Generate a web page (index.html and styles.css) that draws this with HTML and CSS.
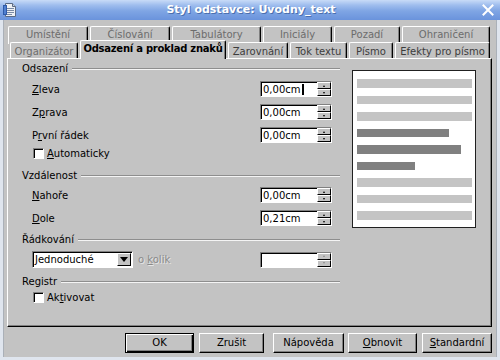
FILE: index.html
```html
<!DOCTYPE html>
<html lang="cs">
<head>
<meta charset="utf-8">
<title>Styl odstavce</title>
<link rel="stylesheet" href="styles.css">
</head>
<body>
<div class="window">
  <div class="titlebar">
    <svg class="app-icon" width="15" height="16" viewBox="0 0 15 16">
      <path d="M2.5 1.5h7l3 3v10h-10z" fill="#eef0f4" stroke="#5a6a84"/>
      <path d="M9.5 1.5v3h3" fill="#c8d0dc" stroke="#5a6a84"/>
      <rect x="4" y="6" width="7" height="1" fill="#7a8aa4"/>
      <rect x="4" y="8" width="7" height="1" fill="#7a8aa4"/>
      <rect x="4" y="10" width="7" height="1" fill="#7a8aa4"/>
      <rect x="4" y="12" width="5" height="1" fill="#7a8aa4"/>
      <rect x="0.5" y="3.5" width="3" height="9" fill="#4f7fd0" stroke="#2f5aa8"/>
    </svg>
    <div class="title">Styl odstavce: Uvodny_text</div>
    <svg class="close" width="12" height="12" viewBox="0 0 12 12">
      <path d="M1.5 1.5l9 9M10.5 1.5l-9 9" stroke="#fff" stroke-width="2" stroke-linecap="square"/>
    </svg>
  </div>
  <div class="frame">
    <div class="tabs">
      <div class="tabrow back">
        <div class="tab">Umístění</div>
        <div class="tab">Číslování</div>
        <div class="tab">Tabulátory</div>
        <div class="tab">Iniciály</div>
        <div class="tab">Pozadí</div>
        <div class="tab">Ohraničení</div>
      </div>
      <div class="tabrow front">
        <div class="tab dim">Organizátor</div>
        <div class="tab selected">Odsazení a proklad znaků</div>
        <div class="tab">Zarovnání</div>
        <div class="tab">Tok textu</div>
        <div class="tab">Písmo</div>
        <div class="tab">Efekty pro písmo</div>
      </div>
    </div>
    <div class="panel">
      <div class="form">
        <div class="group-title">Odsazení</div>
        <div class="row first">
          <span class="label"><u>Z</u>leva</span>
          <div class="spin"><span class="value">0,00cm<span class="caret"></span></span><span class="spin-btn"><span class="up"></span><span class="down"></span></span></div>
        </div>
        <div class="row">
          <span class="label">Z<u>p</u>rava</span>
          <div class="spin"><span class="value">0,00cm</span><span class="spin-btn"><span class="up"></span><span class="down"></span></span></div>
        </div>
        <div class="row">
          <span class="label">P<u>r</u>vní řádek</span>
          <div class="spin"><span class="value">0,00cm</span><span class="spin-btn"><span class="up"></span><span class="down"></span></span></div>
        </div>
        <div class="check-row auto">
          <span class="checkbox"></span><span><u>A</u>utomaticky</span>
        </div>

        <div class="group-title g2">Vzdálenost</div>
        <div class="row r-top">
          <span class="label"><u>N</u>ahoře</span>
          <div class="spin"><span class="value">0,00cm</span><span class="spin-btn"><span class="up"></span><span class="down"></span></span></div>
        </div>
        <div class="row">
          <span class="label"><u>D</u>ole</span>
          <div class="spin"><span class="value">0,21cm</span><span class="spin-btn"><span class="up"></span><span class="down"></span></span></div>
        </div>

        <div class="group-title g3">Řádkování</div>
        <div class="row r-spacing">
          <div class="dropdown"><span class="value">Jednoduché</span><span class="drop-btn"><span class="tri"></span></span></div>
          <span class="label disabled">o <u>k</u>olik</span>
          <div class="spin"><span class="value"></span><span class="spin-btn off"><span class="up"></span><span class="down"></span></span></div>
        </div>

        <div class="group-title g4">Registr</div>
        <div class="check-row reg">
          <span class="checkbox"></span><span>Ak<u>t</u>ivovat</span>
        </div>
      </div>
      <div class="preview">
        <div class="bar"></div>
        <div class="bar"></div>
        <div class="bar"></div>
        <div class="bar dark w80"></div>
        <div class="bar dark w90"></div>
        <div class="bar dark w50"></div>
        <div class="bar"></div>
        <div class="bar"></div>
        <div class="bar"></div>
      </div>
    </div>
    <div class="buttons">
      <div class="btn default b-ok">OK</div>
      <div class="btn b-cancel">Zrušit</div>
      <div class="btn b-help">Nápověda</div>
      <div class="btn b-reset"><u>O</u>bnovit</div>
      <div class="btn b-std"><u>S</u>tandardní</div>
    </div>
  </div>
</div>
</body>
</html>
```

FILE: styles.css
```css
html, body {
  margin: 0;
  padding: 0;
}
body {
  width: 500px;
  height: 360px;
  overflow: hidden;
  background: #c3c3c3;
  font-family: "DejaVu Sans", "Liberation Sans", sans-serif;
  font-size: 10px;
  color: #000;
}
u {
  text-decoration: underline;
  text-underline-offset: 1px;
}
.window {
  width: 500px;
  height: 360px;
  display: flex;
  flex-direction: column;
}
.titlebar {
  height: 20px;
  flex: none;
  display: flex;
  align-items: center;
  background: linear-gradient(#c8dbf7 0%, #a0beee 25%, #7fa5e4 55%, #6a93dc 100%);
}
.app-icon {
  margin-left: 3px;
  flex: none;
}
.title {
  flex: 1;
  text-align: center;
  color: #fff;
  font-weight: bold;
  font-size: 11px;
  line-height: 20px;
  text-shadow: 1px 1px 0 #4b6fae;
  padding-left: 2px;
}
.close {
  margin-right: 6px;
  flex: none;
}
.frame {
  flex: 1;
  display: flex;
  flex-direction: column;
  border-left: 3px solid #dfe5ee;
  border-right: 3px solid #dfe5ee;
  border-bottom: 3px solid #dfe5ee;
  box-shadow: inset 1px 0 0 #aab0b8, inset -1px 0 0 #aab0b8;
}

/* tabs */
.tabs {
  padding-top: 6px;
}
.tabrow {
  display: flex;
  height: 16px;
}
.tabrow.back {
  padding-left: 5px;
  gap: 2px;
}
.tabrow.front {
  padding-left: 7px;
  gap: 2px;
  align-items: flex-end;
}
.tab {
  box-sizing: border-box;
  height: 16px;
  border: 1px solid;
  border-color: #fff #000 transparent #fff;
  border-bottom: 0;
  border-radius: 2px 2px 0 0;
  box-shadow: inset -1px 0 0 #808080;
  text-align: center;
  line-height: 16px;
  white-space: nowrap;
  background: #c3c3c3;
}
.back .tab {
  color: #6c6c6c;
  height: 18px;
  line-height: 15px;
}
.front .tab {
  color: #3c3c3c;
  line-height: 17px;
  z-index: 1;
}
.front .tab.dim {
  color: #6c6c6c;
}
.back .tab:nth-child(1) { width: 80px; }
.back .tab:nth-child(2) { width: 80px; }
.back .tab:nth-child(3) { width: 89px; }
.back .tab:nth-child(4) { width: 69px; }
.back .tab:nth-child(5) { width: 66px; }
.back .tab:nth-child(6) { width: 88px; }
.front .tab:nth-child(1) { width: 68px; }
.front .tab:nth-child(2) { width: 146px; }
.front .tab:nth-child(3) { width: 60px; }
.front .tab:nth-child(4) { width: 57px; }
.front .tab:nth-child(5) { width: 44px; }
.front .tab:nth-child(6) { width: 95px; }
.tab.selected {
  height: 19px;
  margin-bottom: -1px;
  color: #000;
  font-weight: bold;
  letter-spacing: -0.25px;
  line-height: 16px;
  z-index: 2;
}

/* panel */
.panel {
  box-sizing: border-box;
  height: 269px;
  margin: 0 5px 0 4px;
  border: 1px solid;
  border-color: #fff #000 #000 #fff;
  box-shadow: inset -1px -1px 0 #808080;
  padding: 4px 0 0 14px;
  display: grid;
  grid-template-columns: 318px 124px;
  column-gap: 12px;
  align-items: start;
}
.form {
  display: flex;
  flex-direction: column;
}
.group-title {
  display: flex;
  align-items: center;
  gap: 4px;
  height: 12px;
  line-height: 12px;
  white-space: nowrap;
}
.group-title::after {
  content: "";
  flex: 1;
  border-top: 1px solid #8e8e8e;
  border-bottom: 1px solid #f4f4f4;
}
.g2 { margin-top: 11px; }
.g3 { margin-top: 8px; }
.g4 { margin-top: 8px; }

.row {
  display: flex;
  align-items: center;
  height: 16px;
  margin-top: 7px;
  padding-left: 10px;
  padding-right: 8px;
}
.row.first { margin-top: 6px; }
.row.r-top { margin-top: 5px; }
.row.r-spacing { margin-top: 5px; height: 17px; }
.label {
  flex: 1;
  white-space: nowrap;
}
.label.disabled {
  color: #8a8a8a;
  text-shadow: 1px 1px 0 #e6e6e6;
  margin-left: 5px;
}

.spin {
  box-sizing: border-box;
  width: 72px;
  height: 16px;
  display: flex;
  background: #fff;
  border: 1px solid;
  border-color: #808080 #fff #fff #808080;
  box-shadow: inset 1px 1px 0 #000;
}
.spin .value {
  flex: 1;
  padding-left: 2px;
  padding-top: 1px;
  line-height: 13px;
  display: flex;
  align-items: center;
}
.caret {
  display: inline-block;
  width: 0;
  height: 11px;
  border-left: 2px solid #000;
  margin-left: 1px;
}
.spin-btn {
  width: 14px;
  display: flex;
  flex-direction: column;
}
.spin-btn .up,
.spin-btn .down {
  flex: 1;
  box-sizing: border-box;
  background: #c3c3c3;
  border: 1px solid;
  border-color: #fff #000 #000 #fff;
  display: flex;
  align-items: center;
  justify-content: center;
}
.spin-btn .up::before {
  content: "";
  border-left: 1.5px solid transparent;
  border-right: 1.5px solid transparent;
  border-bottom: 2px solid #000;
}
.spin-btn .down::before {
  content: "";
  border-left: 1.5px solid transparent;
  border-right: 1.5px solid transparent;
  border-top: 2px solid #000;
}
.spin-btn.off .up::before { border-bottom-color: #8a8a8a; }
.spin-btn.off .down::before { border-top-color: #8a8a8a; }

.dropdown {
  box-sizing: border-box;
  width: 101px;
  height: 17px;
  flex: none;
  display: flex;
  background: #fff;
  border: 1px solid;
  border-color: #808080 #fff #fff #808080;
  box-shadow: inset 1px 1px 0 #000;
}
.dropdown .value {
  flex: 1;
  padding-left: 2px;
  line-height: 15px;
}
.drop-btn {
  box-sizing: border-box;
  width: 14px;
  margin: 1px 1px 1px 0;
  background: #c3c3c3;
  border: 1px solid;
  border-color: #fff #000 #000 #fff;
  display: flex;
  align-items: center;
  justify-content: center;
}
.tri {
  width: 0;
  height: 0;
  border-left: 4px solid transparent;
  border-right: 4px solid transparent;
  border-top: 5px solid #000;
}

.check-row {
  display: flex;
  align-items: center;
  gap: 3px;
  height: 12px;
  padding-left: 11px;
}
.check-row.auto { margin-top: 4px; }
.check-row.reg { margin-top: 3px; }
.checkbox {
  box-sizing: border-box;
  width: 11px;
  height: 11px;
  background: #fff;
  border: 1px solid;
  border-color: #808080 #fff #fff #808080;
  box-shadow: inset 1px 1px 0 #000;
}

/* preview */
.preview {
  box-sizing: border-box;
  width: 124px;
  height: 158px;
  margin-top: 7px;
  background: #fff;
  border: 1px solid #202020;
  padding: 8px 3px 0 4px;
  display: flex;
  flex-direction: column;
  gap: 8px;
}
.bar {
  height: 8.5px;
  background: #c4c4c4;
  flex: none;
}
.bar.dark { background: #808080; }
.w80 { width: 80%; }
.w90 { width: 90%; }
.w50 { width: 50%; }

/* buttons */
.buttons {
  display: flex;
  justify-content: flex-end;
  margin-top: 6px;
  padding-right: 5px;
}
.btn {
  box-sizing: border-box;
  height: 20px;
  line-height: 18px;
  text-align: center;
  background: #c3c3c3;
  border: 1px solid;
  border-color: #fff #000 #000 #fff;
  box-shadow: inset -1px -1px 0 #808080;
  white-space: nowrap;
}
.btn.default {
  border: 1px solid #000;
  box-shadow: inset 1px 1px 0 #fff, inset -1px -1px 0 #000, inset -2px -2px 0 #808080;
}
.b-ok { width: 69px; }
.b-cancel { width: 65px; margin-left: 5px; }
.b-help { width: 71px; margin-left: 9px; }
.b-reset { width: 69px; margin-left: 4px; }
.b-std { width: 70px; margin-left: 5px; }
```
